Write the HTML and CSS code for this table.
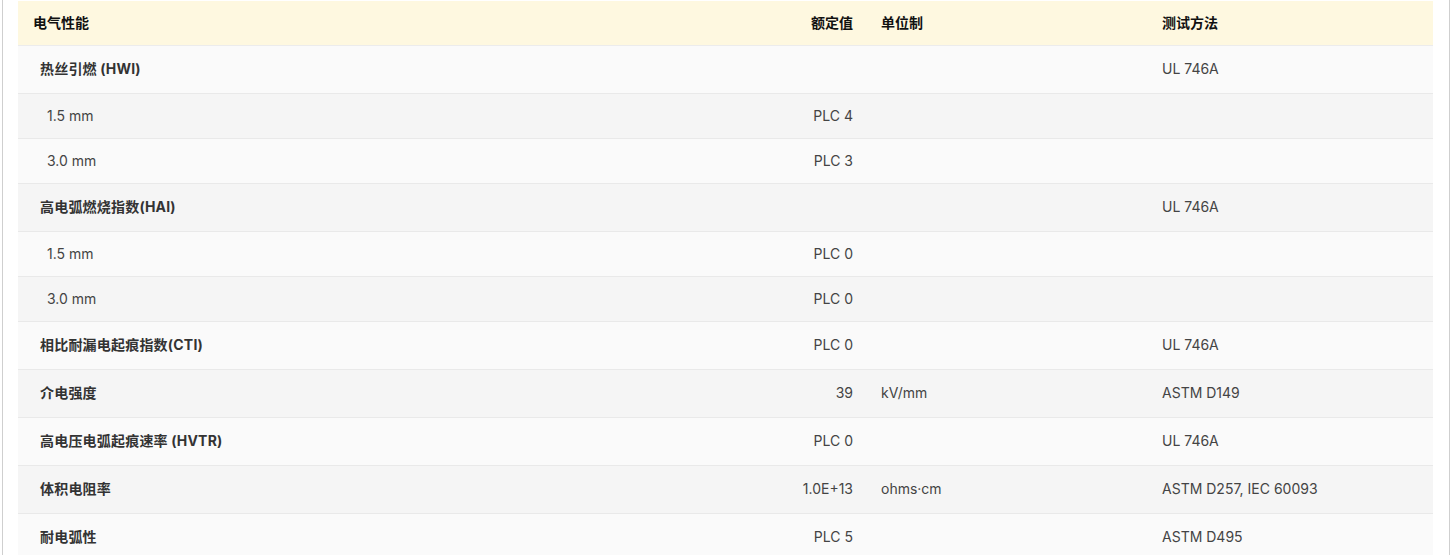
FILE: index.html
```html
<!DOCTYPE html>
<html lang="zh">
<head>
<meta charset="utf-8">
<title>电气性能</title>
<link rel="stylesheet" href="styles.css">
</head>
<body>
<div class="panel">
  <table class="spec">
    <colgroup>
      <col class="c1"><col class="c2"><col class="c3"><col class="c4">
    </colgroup>
    <thead>
      <tr>
        <th class="name">电气性能</th>
        <th class="val">额定值</th>
        <th>单位制</th>
        <th>测试方法</th>
      </tr>
    </thead>
    <tbody>
      <tr class="main"><td class="name">热丝引燃 (HWI)</td><td class="val"></td><td></td><td>UL 746A</td></tr>
      <tr class="sub"><td class="name">1.5 mm</td><td class="val">PLC 4</td><td></td><td></td></tr>
      <tr class="sub"><td class="name">3.0 mm</td><td class="val">PLC 3</td><td></td><td></td></tr>
      <tr class="main"><td class="name">高电弧燃烧指数(HAI)</td><td class="val"></td><td></td><td>UL 746A</td></tr>
      <tr class="sub"><td class="name">1.5 mm</td><td class="val">PLC 0</td><td></td><td></td></tr>
      <tr class="sub"><td class="name">3.0 mm</td><td class="val">PLC 0</td><td></td><td></td></tr>
      <tr class="main"><td class="name">相比耐漏电起痕指数(CTI)</td><td class="val">PLC 0</td><td></td><td>UL 746A</td></tr>
      <tr class="main"><td class="name">介电强度</td><td class="val">39</td><td>kV/mm</td><td>ASTM D149</td></tr>
      <tr class="main"><td class="name">高电压电弧起痕速率 (HVTR)</td><td class="val">PLC 0</td><td></td><td>UL 746A</td></tr>
      <tr class="main"><td class="name">体积电阻率</td><td class="val">1.0E+13</td><td>ohms·cm</td><td>ASTM D257, IEC 60093</td></tr>
      <tr class="main"><td class="name">耐电弧性</td><td class="val">PLC 5</td><td></td><td>ASTM D495</td></tr>
    </tbody>
  </table>
</div>
</body>
</html>
```

FILE: styles.css
```css
html, body {
  margin: 0;
  padding: 0;
  background: #ffffff;
}
body {
  font-family: "Inter", "Noto Sans CJK SC", sans-serif;
  font-size: 14px;
  color: #444444;
}
.panel {
  margin-left: 2px;
  width: 1448px;
  height: 555px;
  box-sizing: border-box;
  border-left: 1px solid #cfcfcf;
  border-right: 1px solid #cfcfcf;
  padding: 1px 15px 0 15px;
  overflow: hidden;
}
.spec {
  width: 1415px;
  border-collapse: collapse;
  table-layout: fixed;
}
.c1 { width: 700px; }
.c2 { width: 148px; }
.c3 { width: 281px; }
.c4 { width: 286px; }
.spec th, .spec td {
  padding: 0 15px 2px 15px;
  text-align: left;
  vertical-align: middle;
  white-space: nowrap;
}
.spec th {
  height: 42px;
  background: #fef8e0;
  color: #111111;
  font-weight: 700;
  border-bottom: 1px solid #ececec;
}
.spec td {
  border-bottom: 1px solid #e9e9e9;
}
.spec .val {
  text-align: right;
  padding-right: 13px;
}
.spec tbody tr:nth-child(odd) td { background: #fafafa; }
.spec tbody tr:nth-child(even) td { background: #f5f5f5; }
.spec tr.main td { height: 45px; padding-bottom: 3px; }
.spec tr.main td { height: 44px; }
.spec tr.sub td { height: 42px; }
.spec tr.main td.name {
  padding-left: 22px;
  font-weight: 700;
  color: #333333;
  letter-spacing: 0.2px;
}
.spec tr.sub td.name {
  padding-left: 29px;
}
```
